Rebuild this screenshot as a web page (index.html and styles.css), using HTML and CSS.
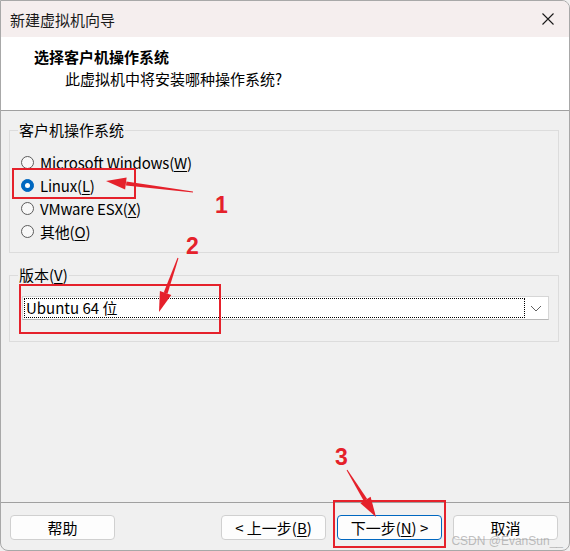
FILE: index.html
```html
<!DOCTYPE html>
<html lang="zh-CN">
<head>
  <meta charset="UTF-8" />
  <meta name="viewport" content="width=device-width, initial-scale=1.0" />
  <title>新建虚拟机向导</title>
  <link rel="stylesheet" href="styles.css">
</head>
<body>
  <div class="ventana">
    <div class="barra-titulo">
      <span class="titulo">新建虚拟机向导</span>
      <span class="cerrar">
        <svg width="14" height="14" viewBox="0 0 14 14"><path d="M1.5 1.5 L12.5 12.5 M12.5 1.5 L1.5 12.5" stroke="#1a1a1a" stroke-width="1.1" fill="none"/></svg>
      </span>
    </div>

    <div class="cabecera">
      <div class="cabecera-titulo">选择客户机操作系统</div>
      <div class="cabecera-sub">此虚拟机中将安装哪种操作系统?</div>
    </div>

    <div class="contenido">
      <fieldset class="grupo grupo-so">
        <legend>客户机操作系统</legend>
        <label class="opcion"><span class="radio"></span>Microsoft Windows(<u>W</u>)</label>
        <label class="opcion"><span class="radio marcado"></span>Linux(<u>L</u>)</label>
        <label class="opcion"><span class="radio"></span>VMware ESX(<u>X</u>)</label>
        <label class="opcion"><span class="radio"></span>其他(<u>O</u>)</label>
      </fieldset>

      <fieldset class="grupo grupo-version">
        <legend>版本(<u>V</u>)</legend>
        <div class="combo">
          <div class="combo-valor">Ubuntu 64 位</div>
          <span class="combo-flecha">
            <svg width="12" height="7" viewBox="0 0 12 7"><path d="M1 1 L6 6 L11 1" stroke="#606060" stroke-width="1" fill="none"/></svg>
          </span>
        </div>
      </fieldset>
    </div>

    <div class="pie">
      <button class="boton ayuda">帮助</button>
      <button class="boton">&lt; 上一步(<u>B</u>)</button>
      <button class="boton activo">下一步(<u>N</u>) &gt;</button>
      <button class="boton">取消</button>
    </div>

    <div class="marca-agua">CSDN @EvanSun__</div>

    <!-- anotaciones rojas -->
    <svg class="anotaciones" width="570" height="551" viewBox="0 0 570 551">
      <g fill="none" stroke="#e5212b" stroke-width="2">
        <rect x="13" y="169" width="122" height="29"/>
        <rect x="20" y="285" width="200" height="48"/>
        <rect x="334" y="501" width="111" height="46"/>
      </g>
      <g fill="#e5212b">
        <polygon points="193,191.5 193,192.5 126,185.5 126.4,181.5"/>
        <polygon points="106,181 126.6,177.6 125.1,189.5"/>
        <polygon points="178.5,258.2 177.5,257.8 163.7,292.4 167.5,293.8"/>
        <polygon points="159,312 171.3,295.1 159.9,291.1"/>
        <polygon points="347.4,469.7 346.6,470.3 363.8,501 367.2,499"/>
        <polygon points="376,517 370.6,496.8 360.4,503.2"/>
        <text x="215" y="213" class="numero">1</text>
        <text x="186" y="254" class="numero">2</text>
        <text x="335" y="465" class="numero">3</text>
      </g>
    </svg>
  </div>
</body>
</html>
```

FILE: styles.css
```css
* {
  box-sizing: border-box;
}
body {
  margin: 0;
  background: #f0f0f0;
  font-family: "Noto Sans CJK SC", "Noto Sans", sans-serif;
  font-size: 15px;
  color: #000;
}
u {
  text-decoration-thickness: 1px;
  text-underline-offset: 2px;
}
.ventana {
  position: relative;
  width: 570px;
  height: 551px;
  border: 1px solid #a8a8a8;
  border-radius: 0 8px 8px 8px;
  overflow: hidden;
  display: flex;
  flex-direction: column;
  background: #f0f0f0;
}
.barra-titulo {
  height: 36px;
  background: #f5eeee;
  display: flex;
  align-items: center;
  justify-content: space-between;
  padding: 0 14px 0 9px;
}
.titulo {
  font-size: 15px;
  color: #1a1a1a;
}
.cerrar {
  display: flex;
}
.cabecera {
  height: 74px;
  background: #fff;
  border-bottom: 1px solid #a0a0a0;
  padding-top: 9px;
}
.cabecera-titulo {
  font-weight: bold;
  padding-left: 33px;
  line-height: 22px;
}
.cabecera-sub {
  padding-left: 64px;
  line-height: 22px;
}
.contenido {
  flex: 1;
  padding: 10px 10px 0 8px;
}
.grupo {
  margin: 0;
  border: 1px solid #dcdcdc;
  padding: 0 9px 0 11px;
}
.grupo legend {
  padding: 0 1px;
  margin-left: -3px;
  line-height: 18px;
}
.grupo-so {
  padding-top: 12px;
  padding-bottom: 9px;
}
.opcion {
  display: flex;
  align-items: center;
  height: 23px;
  letter-spacing: -0.2px;
}
.radio {
  flex: none;
  width: 13px;
  height: 13px;
  border: 1px solid #5c5c5c;
  border-radius: 50%;
  background: #f8f8f8;
  margin-right: 6px;
  display: flex;
  align-items: center;
  justify-content: center;
}
.radio.marcado {
  background: #0067c0;
  border-color: #0067c0;
}
.radio.marcado::after {
  content: "";
  width: 5px;
  height: 5px;
  border-radius: 50%;
  background: #fff;
}
.grupo-version {
  margin-top: 13px;
  padding-top: 12px;
  padding-bottom: 21px;
}
.combo {
  height: 24px;
  margin-left: 1px;
  background: #fff;
  border: 1px solid #d6d6d6;
  border-bottom-color: #b8b8b8;
  display: flex;
  align-items: center;
  padding: 1px;
}
.combo-valor {
  flex: 1;
  height: 20px;
  border: 1px dotted #000;
  padding-left: 1px;
  line-height: 18px;
}
.combo-flecha {
  width: 22px;
  display: flex;
  justify-content: center;
}
.pie {
  height: 48px;
  border-top: 1px solid #a0a0a0;
  display: flex;
  align-items: flex-start;
  gap: 11px;
  padding: 12px 11px 0 9px;
}
.boton {
  width: 105px;
  height: 25px;
  font-family: inherit;
  font-size: 15px;
  background: #fdfdfd;
  border: 1px solid #d0d0d0;
  border-radius: 4px;
  color: #000;
  padding: 0;
}
.boton.ayuda {
  margin-right: auto;
}
.boton.activo {
  border-color: #0067c0;
}
.marca-agua {
  position: absolute;
  right: 6px;
  bottom: 2px;
  font-family: "Liberation Sans", Arial, sans-serif;
  font-size: 12px;
  color: rgba(140, 140, 140, 0.55);
}
.anotaciones {
  position: absolute;
  left: -1px;
  top: -1px;
  pointer-events: none;
}
.numero {
  font-family: "Liberation Sans", Arial, sans-serif;
  font-weight: bold;
  font-size: 23px;
}
```
